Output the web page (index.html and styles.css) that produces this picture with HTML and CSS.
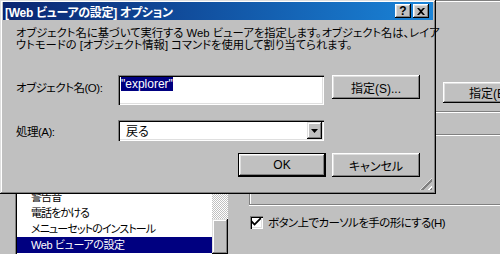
FILE: index.html
```html
<!DOCTYPE html>
<html lang="ja">
<head>
<meta charset="utf-8">
<link rel="stylesheet" href="styles.css">
</head>
<body>
<div class="back">
  <div class="left-col">
    <div class="listbox">
      <ul class="items">
        <li>警告音</li>
        <li>電話をかける</li>
        <li>メニューセットのインストール</li>
        <li class="sel">Web ビューアの設定</li>
      </ul>
      <div class="vscroll">
        <div class="track"></div>
        <div class="thumb"></div>
      </div>
    </div>
  </div>
  <div class="right-col">
    <div class="panel">
      <div class="panel-btn-row"><span class="btn wide">指定(B)...</span></div>
      <div class="hline first"></div>
      <div class="hline second"></div>
    </div>
    <label class="check-row"><span class="checkbox"><svg width="9" height="9" viewBox="0 0 7 7"><path d="M0 2 L0 4 L2 6 L7 1 L7 -1 L2 4 Z" fill="#000"/></svg></span><span>ボタン上でカーソルを手の形にする(H)</span></label>
  </div>
</div>

<div class="dialog">
  <div class="titlebar">
    <span class="title-text">[Web ビューアの設定] オプション</span>
    <span class="title-btns">
      <span class="tbtn">?</span>
      <span class="tbtn"><svg width="8" height="7" viewBox="0 0 8 7"><path d="M0 0h2l2 2 2-2h2L5 3.5 8 7H6L4 5 2 7H0l3-3.5z" fill="#000"/></svg></span>
    </span>
  </div>
  <div class="content">
    <p class="desc">オブジェクト名に基づいて実行する Web ビューアを指定します。オブジェクト名は、レイア<br>ウトモードの [オブジェクト情報] コマンドを使用して割り当てられます。</p>
    <div class="form">
      <span class="label l1">オブジェクト名(O):</span>
      <div class="textbox"><span class="selected">"explorer"</span></div>
      <span class="btn">指定(S)...</span>
      <span class="label l2">処理(A):</span>
      <div class="combo"><span class="combo-val">戻る</span><span class="combo-arrow"><svg width="7" height="4" viewBox="0 0 7 4"><path d="M0 0h7L3.5 4z" fill="#000"/></svg></span></div>
    </div>
    <div class="actions">
      <span class="btn default">OK</span>
      <span class="btn">キャンセル</span>
    </div>
  </div>
  <div class="grip"></div>
</div>
</body>
</html>
```
FILE: styles.css
```css
* { box-sizing: border-box; }
html, body {
  margin: 0;
  padding: 0;
  width: 500px;
  height: 254px;
  overflow: hidden;
  background: #c0c0c0;
  font-family: "Liberation Sans", "Noto Sans CJK JP", sans-serif;
  font-size: 11px;
  font-feature-settings: "palt";
  color: #000;
}
.back {
  display: grid;
  grid-template-columns: 249px 251px;
  height: 254px;
  overflow: hidden;
}
.left-col {
  padding: 187px 0 0 15px;
  overflow: hidden;
}
.listbox {
  display: flex;
  width: 215px;
  height: 67px;
  border-top: 1px solid #808080;
  border-left: 1px solid #808080;
  box-shadow: inset 1px 1px #000;
  padding: 1px 0 0 1px;
  overflow: hidden;
}
.items {
  list-style: none;
  margin: 0;
  padding: 0;
  width: 195px;
  background: #fff;
}
.items li {
  height: 16px;
  line-height: 16px;
  padding-left: 14px;
  white-space: nowrap;
  letter-spacing: -0.9px;
}
.items li.sel {
  background: #000080;
  color: #fff;
  letter-spacing: -0.4px;
}
.vscroll {
  width: 16px;
  display: flex;
  flex-direction: column;
}
.track {
  height: 35px;
  background-color: #fff;
  background-image: repeating-conic-gradient(#c0c0c0 0 25%, #fff 0 50%);
  background-size: 2px 2px;
}
.thumb {
  height: 40px;
  background: #c0c0c0;
  box-shadow: inset -1px -1px #000, inset 1px 1px #dfdfdf, inset -2px -2px #808080, inset 2px 2px #fff;
}
.right-col {
  display: flex;
  flex-direction: column;
  overflow: hidden;
}
.panel {
  height: 205px;
  border: 1px solid #808080;
  border-right: none;
  box-shadow: inset 1px 1px #fff, 0 1px #fff;
  padding-top: 81px;
  display: flex;
  flex-direction: column;
}
.panel-btn-row {
  padding-left: 193px;
  height: 21px;
  white-space: nowrap;
}
.btn {
  display: inline-flex;
  align-items: center;
  justify-content: center;
  width: 88px;
  height: 24px;
  background: #c0c0c0;
  box-shadow: inset -1px -1px #000, inset 1px 1px #fff, inset -2px -2px #808080, inset 2px 2px #dfdfdf;
  white-space: nowrap;
  font-size: 12px;
}
.btn.wide {
  width: 110px;
  height: 21px;
  padding-right: 8px;
}
.hline {
  height: 2px;
  border-top: 1px solid #808080;
  border-bottom: 1px solid #fff;
}
.hline.first { margin-top: 8px; }
.hline.second { margin-top: 21px; }
.check-row {
  display: flex;
  align-items: center;
  gap: 5px;
  margin: 9px 0 0 1px;
  white-space: nowrap;
  font-size: 11.5px;
  letter-spacing: -0.6px;
}
.checkbox {
  width: 13px;
  height: 13px;
  background: #fff;
  box-shadow: inset 1px 1px #808080, inset 2px 2px #000, inset -1px -1px #fff, inset -2px -2px #dfdfdf;
  display: flex;
  align-items: center;
  justify-content: center;
}

/* dialog window (overlaps the window behind) */
.dialog {
  position: absolute;
  left: 0;
  top: 0;
  width: 436px;
  height: 194px;
  padding: 2px 3px 3px 3px;
  background: #c0c0c0;
  box-shadow: inset -1px -1px #000, inset 1px 1px #dfdfdf, inset -2px -2px #808080, inset 2px 2px #fff;
  display: flex;
  flex-direction: column;
}
.titlebar {
  height: 18px;
  background: linear-gradient(90deg, #0a2470, #1a84d8);
  display: flex;
  align-items: center;
  justify-content: space-between;
  padding: 0 4px 0 2px;
}
.title-text {
  color: #fff;
  font-weight: bold;
  font-size: 12px;
  letter-spacing: -0.3px;
  white-space: nowrap;
}
.title-btns {
  display: flex;
  gap: 2px;
}
.tbtn {
  width: 16px;
  height: 14px;
  background: #c0c0c0;
  box-shadow: inset -1px -1px #000, inset 1px 1px #fff, inset -2px -2px #808080, inset 2px 2px #dfdfdf;
  display: flex;
  align-items: center;
  justify-content: center;
  font-weight: bold;
  font-size: 12px;
  line-height: 12px;
}
.content {
  padding: 7px 13px 0 13px;
  flex: 1;
}
.desc {
  margin: 0;
  line-height: 12px;
  white-space: nowrap;
  font-size: 11.3px;
}
.form {
  margin-top: 24px;
  display: grid;
  grid-template-columns: 102px 206px 96px;
  row-gap: 15px;
  grid-template-rows: 30px 21px;
  width: 404px;
}
.form .btn { margin-left: 8px; }
.label { white-space: nowrap; font-size: 11.5px; letter-spacing: -0.5px; }
.label.l1 { padding-top: 4px; }
.label.l2 { align-self: center; }
.textbox {
  background: #fff;
  box-shadow: inset 1px 1px #808080, inset 2px 2px #000, inset -1px -1px #fff, inset -2px -2px #dfdfdf;
  padding: 2px 0 0 3px;
  line-height: 14px;
  font-size: 12px;
}
.selected {
  background: #000080;
  color: #fff;
}
.combo {
  background: #fff;
  box-shadow: inset 1px 1px #808080, inset 2px 2px #000, inset -1px -1px #fff, inset -2px -2px #dfdfdf;
  display: flex;
  align-items: center;
  justify-content: space-between;
  padding: 2px;
  font-size: 12px;
}
.combo-val { padding-left: 6px; }
.combo-arrow {
  width: 15px;
  height: 17px;
  background: #c0c0c0;
  box-shadow: inset -1px -1px #000, inset 1px 1px #dfdfdf, inset -2px -2px #808080, inset 2px 2px #fff;
  display: flex;
  align-items: center;
  justify-content: center;
}
.actions {
  margin-top: 12px;
  display: flex;
  justify-content: flex-end;
  gap: 6px;
}
.btn.default {
  box-shadow: inset 0 0 0 1px #000, inset -2px -2px #000, inset 2px 2px #fff, inset -3px -3px #808080, inset 3px 3px #dfdfdf;
}
.grip {
  position: absolute;
  right: 4px;
  bottom: 4px;
  width: 12px;
  height: 12px;
  background: repeating-linear-gradient(135deg, transparent 0 2px, #fff 2px 3px, #808080 3px 5px, transparent 5px 6px);
  clip-path: polygon(100% 0, 100% 100%, 0 100%);
}
```
